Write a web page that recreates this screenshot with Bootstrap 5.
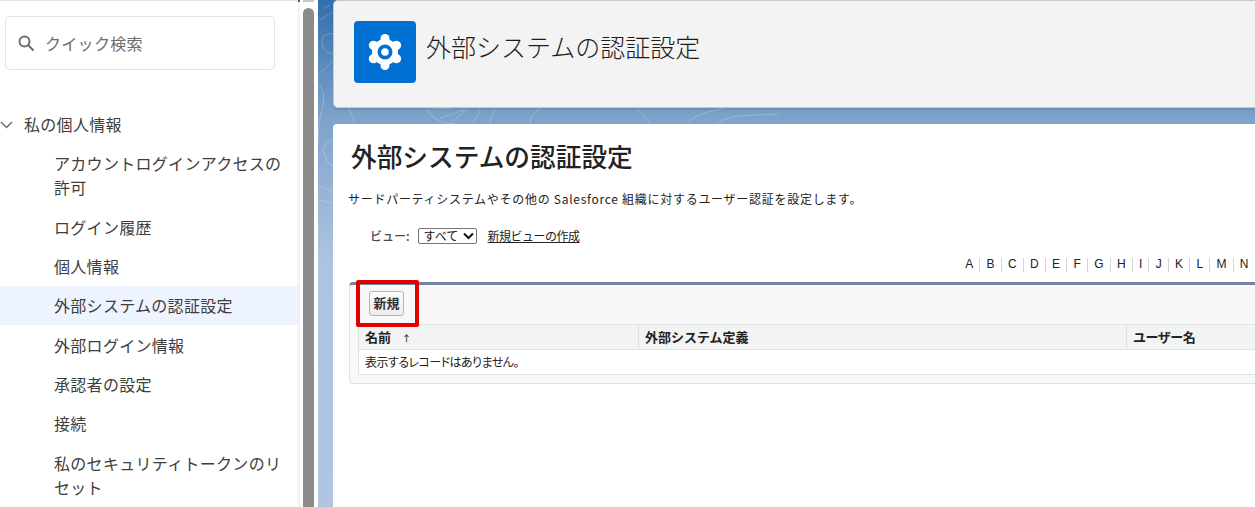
<!DOCTYPE html>
<html lang="ja">
<head>
<meta charset="utf-8">
<title>外部システムの認証設定</title>
<link href="https://cdn.jsdelivr.net/npm/bootstrap@5.3.0/dist/css/bootstrap.min.css" rel="stylesheet">
<style>
html,body{height:507px;overflow:hidden;margin:0;background:#fff;}
body{font-family:"Noto Sans CJK JP","Liberation Sans",sans-serif;color:#3e3e3c;}
.shell{height:507px;width:1255px;}
.side{width:298px;flex:none;height:507px;overflow:hidden;border-top:1px solid #e5e5e5;}
.sep{width:2px;flex:none;background:linear-gradient(#2a6bab 0 2px,#f0f0f0 2px);}
.bar{width:18px;flex:none;padding:0 4px 0 3px;background:#fff;}
.stub{height:2px;background:#c8c8c8;margin-bottom:6px;}
.thumb{background:#8b8b8b;height:calc(100% - 8px);border-radius:6px 6px 0 0;}
.stage{flex:1 1 auto;min-width:0;height:507px;padding-left:15px;overflow:hidden;position:relative;background:linear-gradient(180deg,#2f6fac 0,#7fa3cb 120px,#adc3e0 260px,#b0c5e0 100%);}
.contours{position:absolute;left:0;top:0;}
.stage>.head-box,.stage>.main-box{position:relative;}
.qs{margin:15px 0 0 5px;width:270px;height:54px;border:1px solid #e2e2e2;border-radius:5px;padding-left:12px;gap:11px;font-size:16px;letter-spacing:.3px;color:#706e6b;}
.tree{margin-top:42px;font-size:16px;line-height:24px;color:#3e3e3c;letter-spacing:.3px;}
.tree-head{height:24px;padding-left:0;gap:9px;margin-bottom:7px;}
.tree-item{padding:7.650px 12px 7.650px 54px;}
.tree-item.two{padding-bottom:8.650px;}
.tree-item.on{background:#eef4ff;}
.head-box{height:108px;background:#f3f3f3;border:1px solid #c9c9c9;border-right:0;border-radius:5px 0 0 5px;padding:20px 0 0 20px;gap:10px;box-shadow:0 2px 2px rgba(0,0,0,.1);margin-bottom:16px;}
.ico{width:62px;height:62px;border-radius:4px;background:#0070d2;}
.head-title{font-size:25px;line-height:32px;color:#1c1c1c;margin-top:9px;font-weight:300;}
.main-box{height:384px;background:#fff;border-radius:4px 0 0 0;padding:16px 0 0 15px;}
.main-title{font-size:25.700px;line-height:32px;font-weight:500;color:#222;margin:0 0 0 3px;}
.desc{font-size:12px;line-height:16px;margin-top:19px;color:#222;letter-spacing:.72px;}
.viewrow{font-size:12px;margin:20px 0 0 22px;height:18px;gap:8px;color:#222;}
.viewrow b{font-weight:500;color:#4a4a56;}
.sel{border:1px solid #767676;border-radius:2px;height:16px;width:59px;font-size:12px;line-height:14px;padding-left:5px;gap:5px;color:#111;white-space:nowrap;}
.lnk{color:#222;text-decoration:underline;letter-spacing:-.5px;margin-left:3px;}
.alpha{font-family:"Liberation Sans",sans-serif;font-size:12px;line-height:13px;margin:13px 0 0 611px;height:14px;white-space:nowrap;color:#222;}
.alpha span{padding:0 6.200px;border-right:1px solid #d4d4d4;}
.alpha span:last-child{border-right:0;}
.listbox{margin:10px 0 0 1px;width:906px;height:102px;border:1px solid #e0e3e5;border-top:3px solid #7484a0;border-right:0;border-radius:4px 0 0 4px;background:#f8f8f8;position:relative;}
.btnrow{height:39px;padding:4px 0 0 19px;}
.nbtn{font-size:13px;font-weight:700;line-height:14px;width:35px;height:25px;padding:0;border:1px solid #b5b5b5;border-radius:3px;color:#333;background:linear-gradient(#fdfdfd,#ececec);}
.grid-t{margin-left:8px;font-size:12px;color:#222;}
.grid-h{height:26px;background:#f2f3f3;border-top:1px solid #e0e3e5;border-bottom:1px solid #e0e3e5;border-left:1px solid #e0e3e5;font-weight:700;font-size:13px;line-height:24px;}
.grid-h>div{padding-left:6px;flex:none;}
.c1{width:280px;border-right:1px solid #e0e3e5;}.c2{width:488px;border-right:1px solid #e0e3e5;}
.c3{letter-spacing:-.5px;}
.grid-r{height:25px;line-height:23px;padding-left:6px;background:#fff;border-bottom:1px solid #e0e3e5;border-left:1px solid #e0e3e5;font-feature-settings:"palt";letter-spacing:-.55px;}
.mark-red{position:absolute;left:6px;top:-5px;width:63px;height:47px;border:4px solid #e00000;border-radius:2px;pointer-events:none;}
.arrow{color:#444;font-size:9px;margin-left:11px;font-weight:700;}
</style>
</head>
<body>
<div class="shell d-flex">
  <div class="side">
    <div class="qs d-flex align-items-center">
      <svg width="16" height="16" viewBox="0 0 16 16" fill="none" stroke="#706e6b" stroke-width="2"><circle cx="6.500" cy="6.500" r="5"/><path d="M10.200 10.200 15 15" stroke-linecap="round"/></svg>
      <span>クイック検索</span>
    </div>
    <div class="tree">
      <div class="tree-head d-flex align-items-center">
        <svg width="15" height="15" viewBox="0 0 15 15" fill="none" stroke="#706e6b" stroke-width="1.500"><path d="M1 5l5.500 5.500L12 5"/></svg>
        <span>私の個人情報</span>
      </div>
      <div class="tree-item two">アカウントログインアクセスの許可</div>
      <div class="tree-item">ログイン履歴</div>
      <div class="tree-item">個人情報</div>
      <div class="tree-item on">外部システムの認証設定</div>
      <div class="tree-item">外部ログイン情報</div>
      <div class="tree-item">承認者の設定</div>
      <div class="tree-item">接続</div>
      <div class="tree-item">私のセキュリティトークンのリセット</div>
    </div>
  </div>
  <div class="sep"></div>
  <div class="bar"><div class="stub"></div><div class="thumb"></div></div>
  <div class="stage">
    <svg class="contours" width="937" height="230" viewBox="0 0 937 230" fill="none" stroke="#fff" stroke-opacity=".22"><path d="M1 20c5-2 9-5 14-8M6 8l6-3M15 34c-8-2-12 4-11 10s6 9 11 10M0 84c8 6 6 20 3 30s-3 22-3 30M15 60c-5 6-8 10-15 14M14 140c-6 2-10 8-8 14s6 12 9 12M0 186c5 1 10 3 15 5M0 200l15 3M108 108c4 8 12 16 30 16M30 108c3 5 6 10 6 16M100 104c6 3 18 6 36 4M122 118l24-8M132 124l18-16M162 110c-2 5-4 10-8 14M172 124c0-6 2-12 8-18M212 124c0-8 6-14 12-16M318 108c6 4 10 10 14 16M370 124c5-10 26-14 56-20M400 124c10-10 30-8 60-10"/></svg>
    <div class="head-box d-flex align-items-start">
      <div class="ico d-flex align-items-center justify-content-center">
        <svg width="36" height="38" viewBox="0 0 36 38"><g fill="#fff"><circle cx="18" cy="19" r="13"/><rect x="13.500" y="1" width="9" height="10" rx="4.500"/><rect x="13.500" y="27" width="9" height="10" rx="4.500"/><rect x="13.500" y="1" width="9" height="10" rx="4.500" transform="rotate(60 18 19)"/><rect x="13.500" y="27" width="9" height="10" rx="4.500" transform="rotate(60 18 19)"/><rect x="13.500" y="1" width="9" height="10" rx="4.500" transform="rotate(120 18 19)"/><rect x="13.500" y="27" width="9" height="10" rx="4.500" transform="rotate(120 18 19)"/></g><circle cx="18" cy="19" r="7.500" fill="#0070d2"/><circle cx="18" cy="19" r="3.800" fill="#fff"/></svg>
      </div>
      <div class="head-title">外部システムの認証設定</div>
    </div>
    <div class="main-box">
      <h1 class="main-title">外部システムの認証設定</h1>
      <div class="desc">サードパーティシステムやその他の Salesforce 組織に対するユーザー認証を設定します。</div>
      <div class="viewrow d-flex align-items-center">
        <b>ビュー:</b>
        <div class="sel d-flex align-items-center"><span>すべて</span><svg width="11" height="8" viewBox="0 0 11 8" fill="none" stroke="#111" stroke-width="2"><path d="M1 1.500l4.500 4.500L10 1.500"/></svg></div>
        <a class="lnk" href="#">新規ビューの作成</a>
      </div>
      <div class="alpha d-flex"><span>A</span><span>B</span><span>C</span><span>D</span><span>E</span><span>F</span><span>G</span><span>H</span><span>I</span><span>J</span><span>K</span><span>L</span><span>M</span><span>N</span></div>
      <div class="listbox">
        <div class="btnrow"><button class="nbtn" type="button">新規</button></div>
        <div class="grid-t">
          <div class="grid-h d-flex"><div class="c1">名前<span class="arrow">↑</span></div><div class="c2">外部システム定義</div><div class="c3 flex-grow-1">ユーザー名</div></div>
          <div class="grid-r">表示するレコードはありません。</div>
        </div>
        <div class="mark-red"></div>
      </div>
    </div>
  </div>
</div>
<script src="https://cdn.jsdelivr.net/npm/bootstrap@5.3.0/dist/js/bootstrap.bundle.min.js"></script>
</body>
</html>
